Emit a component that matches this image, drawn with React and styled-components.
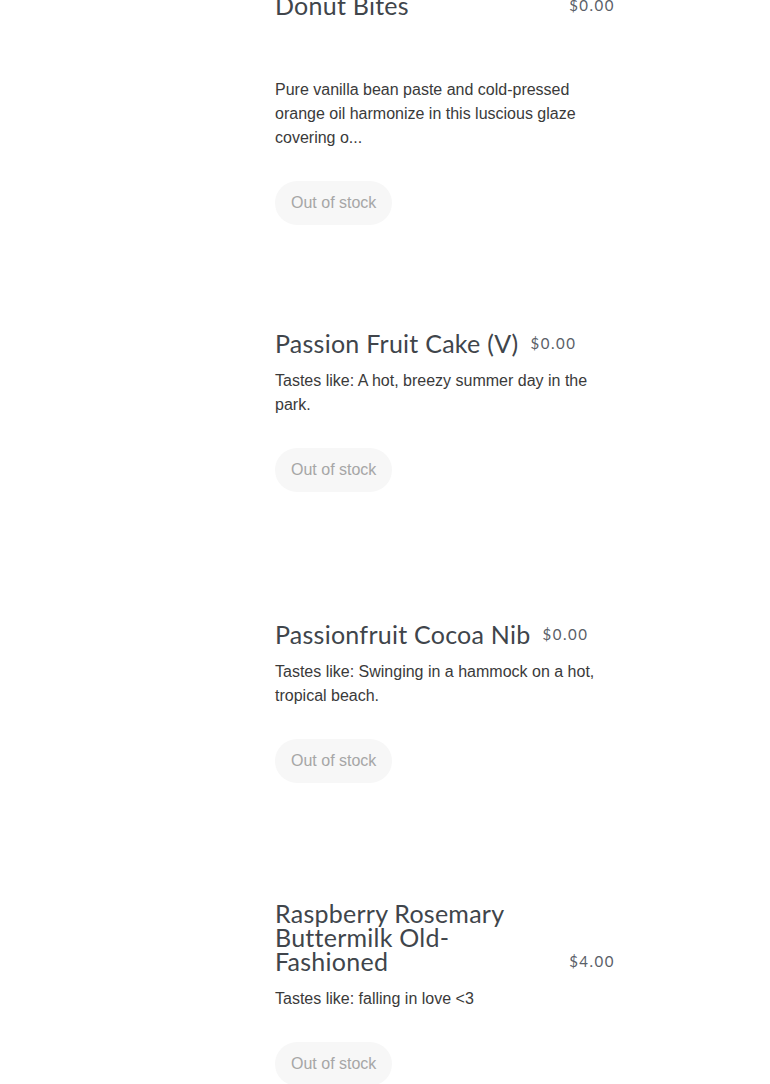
import React from "react";
import styled, { createGlobalStyle } from "styled-components";

const Global = createGlobalStyle`
  html, body { margin: 0; padding: 0; background: #fff; }
  body { overflow: hidden; }
`;

const List = styled.main`
  width: 770px;
  display: flex;
  flex-direction: column;
`;

const Card = styled.section`
  display: grid;
  grid-template-columns: 275px 340px;
  height: ${(p) => p.$height}px;
  align-items: ${(p) => (p.$top ? "start" : "center")};
`;

const ImageSlot = styled.div`
  height: 100%;
`;

const Content = styled.div`
  display: flex;
  flex-direction: column;
  margin-top: ${(p) => p.$shift || 0}px;
`;

const TitleRow = styled.div`
  display: flex;
  align-items: flex-end;
  gap: 12px;
`;

const Title = styled.h2`
  margin: 0;
  flex: ${(p) => (p.$wide ? "1 1 auto" : "0 1 auto")};
  font-family: Lato, "Open Sans", sans-serif;
  font-weight: 400;
  font-size: 25px;
  line-height: 24px;
  color: #40454b;
  letter-spacing: 0.25px;
`;

const Price = styled.span`
  flex: none;
  font-family: Lato, "Open Sans", sans-serif;
  font-size: 15px;
  line-height: 15px;
  letter-spacing: 1.5px;
  color: #5a6068;
  padding-bottom: 4px;
`;

const Desc = styled.p`
  margin: ${(p) => p.$gap ?? 14}px 0 0;
  font-family: "Liberation Sans", Arial, sans-serif;
  font-size: 16px;
  line-height: 24px;
  color: #3a3a3a;
`;

const StockButton = styled.button`
  align-self: flex-start;
  margin-top: 31px;
  height: 44px;
  padding: 0 16px;
  border: none;
  border-radius: 22px;
  background: #f7f7f7;
  color: #a6a6a6;
  font-family: "Liberation Sans", Arial, sans-serif;
  font-size: 16px;
  cursor: default;
`;

const items = [
  {
    title: "Donut Bites",
    price: "$0.00",
    desc: "Pure vanilla bean paste and cold-pressed orange oil harmonize in this luscious glaze covering o...",
    height: 266,
    top: true,
    shift: -7,
    gap: 61,
    wide: true,
  },
  {
    title: "Passion Fruit Cake (V)",
    price: "$0.00",
    desc: "Tastes like: A hot, breezy summer day in the park.",
    height: 291,
  },
  {
    title: "Passionfruit Cocoa Nib",
    price: "$0.00",
    desc: "Tastes like: Swinging in a hammock on a hot, tropical beach.",
    height: 291,
  },
  {
    title: "Raspberry Rosemary Buttermilk Old-Fashioned",
    price: "$4.00",
    desc: "Tastes like: falling in love <3",
    height: 291,
  },
];

export default function App() {
  return (
    <List>
      <Global />
      {items.map((it) => (
        <Card key={it.title} $height={it.height} $top={it.top}>
          <ImageSlot />
          <Content $shift={it.shift}>
            <TitleRow>
              <Title $wide={it.wide}>{it.title}</Title>
              <Price>{it.price}</Price>
            </TitleRow>
            <Desc $gap={it.gap}>{it.desc}</Desc>
            <StockButton type="button">Out of stock</StockButton>
          </Content>
        </Card>
      ))}
    </List>
  );
}
